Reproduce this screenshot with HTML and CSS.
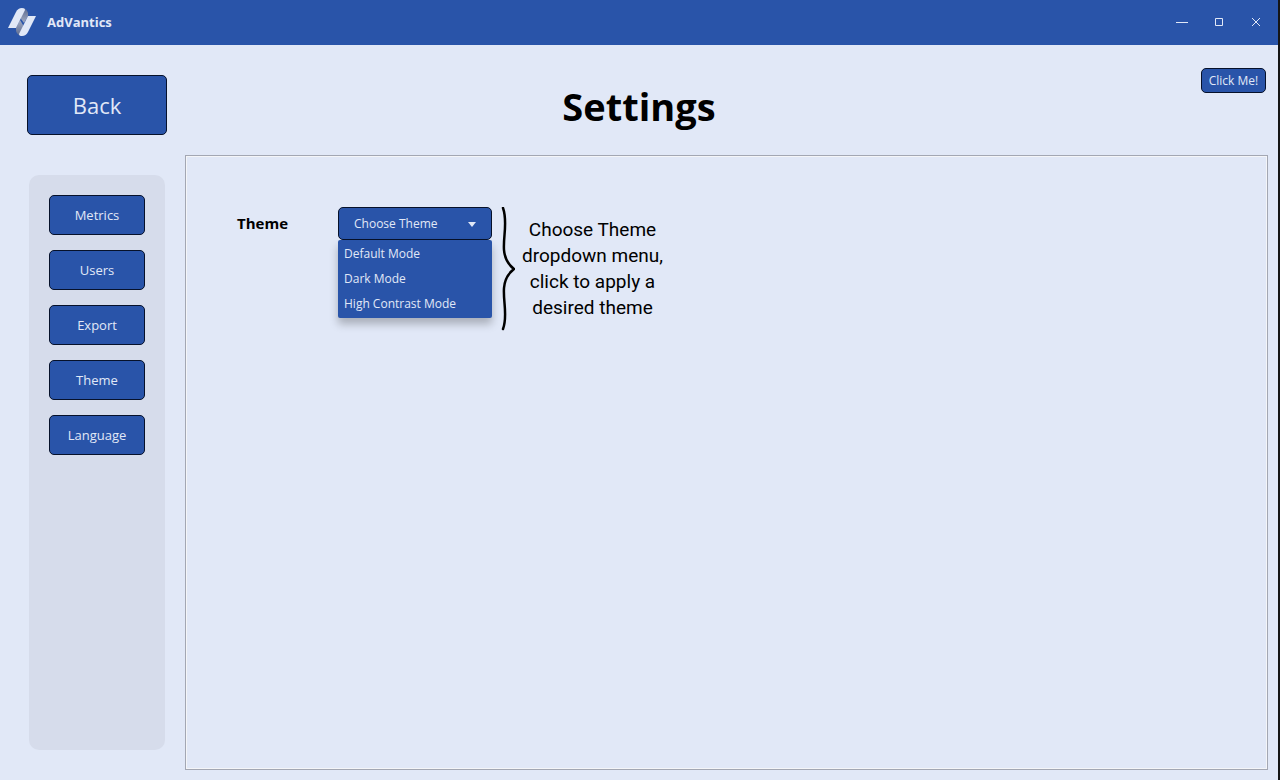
FILE: index.html
```html
<!DOCTYPE html>
<html lang="en">
<head>
<meta charset="utf-8">
<title>AdVantics</title>
<link rel="stylesheet" href="styles.css">
</head>
<body>
<div class="app">
  <header class="titlebar">
    <svg class="logo" viewBox="0 0 28 28" aria-hidden="true">
      <defs>
        <linearGradient id="fold-top" x1="0" y1="0" x2="0" y2="1">
          <stop offset="0" stop-color="#59688f"/>
          <stop offset="1" stop-color="#a3acc2"/>
        </linearGradient>
        <linearGradient id="fold-bottom" x1="0" y1="0" x2="0" y2="1">
          <stop offset="0" stop-color="#a3acc2"/>
          <stop offset="1" stop-color="#59688f"/>
        </linearGradient>
      </defs>
      <path d="M15 0Q19 1 20 5L20 8L16 15L13 11Q12 8 15 3Z" fill="url(#fold-top)"/>
      <path d="M13 28Q8 26 8 22L8 20L12 12L15 17Q16 20 13 25Z" fill="url(#fold-bottom)"/>
      <path d="M0 20L8 4Q10 0 14 0Q17 0 17 2L8 20Z" fill="#e1e8f7"/>
      <path d="M28 8L20 24Q18 28 14 28Q11 28 11 26L20 8Z" fill="#e1e8f7"/>
    </svg>
    <span class="brand">AdVantics</span>
    <div class="window-controls">
      <button class="window-button" aria-label="Minimize"><svg viewBox="0 0 12 12"><path d="M0 6.500H12"/></svg></button>
      <button class="window-button" aria-label="Maximize"><svg viewBox="0 0 12 12"><path d="M2.500 2.500H9.500V9.500H2.500Z"/></svg></button>
      <button class="window-button" aria-label="Close"><svg viewBox="0 0 12 12"><path d="M2 2L10 10M10 2L2 10"/></svg></button>
    </div>
  </header>
  <div class="page-header">
    <button class="button back">Back</button>
    <h1 class="title">Settings</h1>
    <button class="button small">Click Me!</button>
  </div>
  <div class="content">
    <nav class="sidebar">
      <button class="button nav">Metrics</button>
      <button class="button nav">Users</button>
      <button class="button nav">Export</button>
      <button class="button nav">Theme</button>
      <button class="button nav">Language</button>
    </nav>
    <main class="panel">
      <label class="label" for="theme">Theme</label>
      <div class="picker">
        <select class="select" id="theme"><option>Choose Theme</option></select>
        <svg class="arrow" viewBox="0 0 8 5" aria-hidden="true"><path d="M0 0H8L4 5Z"/></svg>
        <div class="menu">
          <button class="option">Default Mode</button>
          <button class="option">Dark Mode</button>
          <button class="option">High Contrast Mode</button>
        </div>
      </div>
      <svg class="brace" viewBox="0 0 14 124" aria-hidden="true"><path d="M2 1C7 15 2 29 3 43Q4 55 13 62Q4 69 3 81C2 95 7 109 2 122"/></svg>
      <p class="note">Choose Theme<br>dropdown menu,<br>click to apply a<br>desired theme</p>
    </main>
  </div>
</div>
</body>
</html>
```
FILE: styles.css
```css
* {
  box-sizing: border-box;
}

body {
  margin: 0;
  background: #e1e8f7;
  color: #000;
  font-family: "Open Sans", "Noto Sans", sans-serif;
}

button,
select {
  margin: 0;
  font-family: inherit;
}

.app {
  display: flex;
  flex-direction: column;
  min-height: 100vh;
  border-right: 2px solid #151515;
}

.titlebar {
  display: flex;
  align-items: center;
  height: 45px;
  padding: 0 4px 1px 8px;
  background: #2954a9;
  color: #e1e8f7;
}

.logo {
  width: 28px;
  height: 28px;
}

.brand {
  margin-left: 11px;
  font-size: 13px;
  font-weight: 700;
}

.window-controls {
  display: flex;
  margin-left: auto;
}

.window-button {
  width: 37px;
  height: 30px;
  padding: 0;
  border: 0;
  background: none;
}

.window-button svg {
  display: block;
  width: 12px;
  height: 12px;
  margin: auto;
  fill: none;
  stroke: #e1e8f7;
}

.page-header {
  display: grid;
  grid-template-columns: 1fr auto 1fr;
  align-items: start;
  height: 110px;
  padding: 23px 12px 0;
}

.title {
  margin: 12px 0 0;
  font-size: 38px;
  line-height: 52px;
}

.button {
  padding: 0;
  border: 1px solid #06112a;
  border-radius: 5px;
  background: #2954a9;
  color: #e1e8f7;
}

.back {
  width: 140px;
  height: 60px;
  margin: 7px 0 0 15px;
  font-size: 22px;
}

.small {
  width: 65px;
  height: 25px;
  justify-self: end;
  font-size: 12px;
}

.content {
  display: flex;
  flex: 1;
  gap: 20px;
  padding: 0 10px 10px 29px;
}

.sidebar {
  display: flex;
  flex-direction: column;
  gap: 15px;
  width: 136px;
  margin: 20px 0;
  padding: 20px;
  border-radius: 10px;
  background: #d6dceb;
}

.nav {
  height: 40px;
  font-size: 13px;
}

.panel {
  display: flex;
  flex: 1;
  align-items: flex-start;
  padding: 51px;
  border: 1px solid #a3a7b3;
  box-shadow: inset 0 0 0 1px #f4f5f8;
}

.label {
  width: 101px;
  font-size: 15px;
  font-weight: 700;
  line-height: 33px;
}

.picker {
  position: relative;
  width: 154px;
}

.select {
  display: block;
  width: 100%;
  height: 33px;
  padding: 0 15px;
  appearance: none;
  border: 1px solid #06112a;
  border-radius: 5px;
  background: #2954a9;
  color: #e1e8f7;
  font-size: 12px;
}

.arrow {
  position: absolute;
  top: 15px;
  right: 16px;
  width: 8px;
  height: 5px;
  fill: #e1e8f7;
}

.menu {
  position: absolute;
  top: 33px;
  left: 0;
  width: 100%;
  padding: 1px 0 2px;
  border-radius: 2px;
  background: #2954a9;
  box-shadow: 0 6px 8px rgba(0, 0, 0, 0.25);
}

.option {
  display: block;
  width: 100%;
  height: 25px;
  padding: 0 6px;
  border: 0;
  background: none;
  color: #e1e8f7;
  font-size: 12px;
  text-align: left;
}

.brace {
  width: 14px;
  height: 124px;
  margin-left: 9px;
  fill: none;
  stroke: #000;
  stroke-width: 2.500;
  stroke-linecap: round;
}

.note {
  margin: 10px 0 0 7px;
  font-family: Roboto, sans-serif;
  font-size: 19px;
  line-height: 26px;
  text-align: center;
}
```
